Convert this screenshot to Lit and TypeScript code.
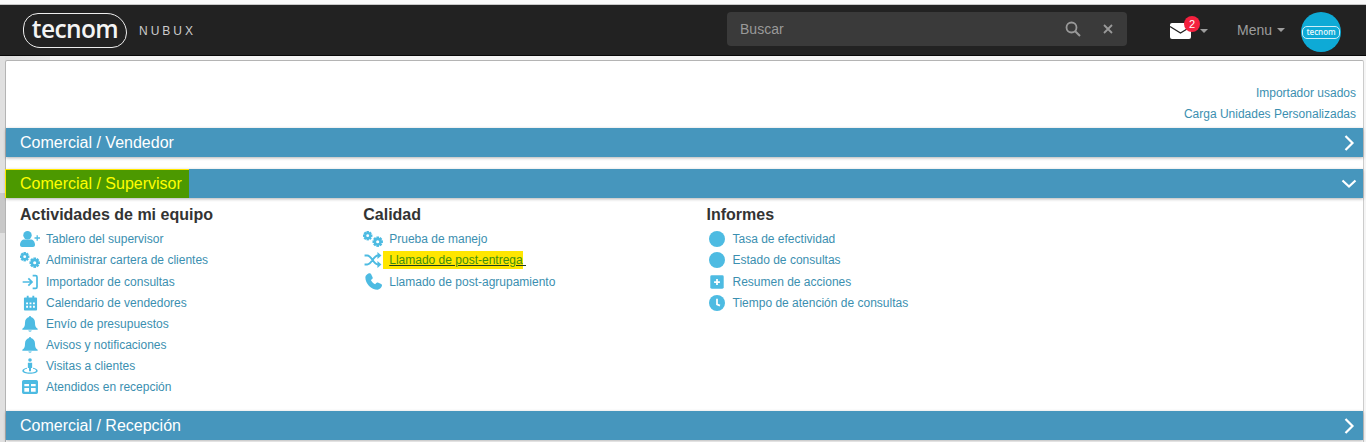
import { LitElement, html, css, svg } from "lit";
import { customElement } from "lit/decorators.js";

const ic = (body: unknown, w = 16, h = 16, vb = "0 0 24 24") =>
  html`<svg class="ic" width=${w} height=${h} viewBox=${vb} fill="#4dbbe2">${body}</svg>`;
const gear = (cx: number, cy: number, r: number) => svg`
  ${[0, 45, 90, 135].map(
    (a) => svg`<rect x=${cx - r * 0.26} y=${cy - r} width=${r * 0.52} height=${r * 2} transform="rotate(${a} ${cx} ${cy})"></rect>`
  )}
  <circle cx=${cx} cy=${cy} r=${r * 0.74}></circle>
  <circle cx=${cx} cy=${cy} r=${r * 0.3} fill="#fff"></circle>`;
const icons: Record<string, unknown> = {
  userPlus: ic(
    svg`<circle cx="7.500" cy="4.200" r="4.200"></circle><path d="M0 14c0-3.500 2-5.500 4.500-5.500h6c2.500 0 4.500 2 4.500 5.500 0 1.300-1 2-2 2H2c-1 0-2-.7-2-2z"></path><path d="M14.500 7h5.500M17.200 4.300v5.400" stroke="#4dbbe2" stroke-width="1.300" fill="none"></path>`,
    20, 16, "0 0 20 16"
  ),
  gears: ic(svg`${gear(4.700, 4.700, 4.700)}${gear(14.700, 10.700, 5.200)}`, 20, 16, "0 0 20 16"),
  signIn: ic(svg`<path d="M1 12h13M9.500 6.500L15 12l-5.500 5.500" fill="none" stroke="#4dbbe2" stroke-width="2.600"></path><path d="M16 2.500h4.500a2 2 0 0 1 2 2v15a2 2 0 0 1-2 2H16" fill="none" stroke="#4dbbe2" stroke-width="2.600"></path>`),
  calendar: ic(svg`<path fill-rule="evenodd" d="M3 3h3V.5h3V3h6V.5h3V3h3a1.500 1.500 0 0 1 1.500 1.500v18A1.500 1.500 0 0 1 21 24H3a1.500 1.500 0 0 1-1.500-1.500v-18A1.500 1.500 0 0 1 3 3zM5 11v3h3v-3zm5.500 0v3h3v-3zM16 11v3h3v-3zM5 16.500v3h3v-3zm5.500 0v3h3v-3zM16 16.500v3h3v-3z"></path>`, 15, 16),
  bell: ic(svg`<path d="M12 0c1 0 1.500.8 1.500 1.600C17 2.500 19.500 5.500 19.500 10c0 5 1 7 4 9v1.500H.5V19c3-2 4-4 4-9 0-4.500 2.500-7.500 6-8.400C10.500.8 11 0 12 0z"></path><path d="M9.500 21.800h5c0 1-1 1.800-2.500 1.800s-2.500-.8-2.500-1.800z"></path>`),
  street: ic(svg`<circle cx="12" cy="3" r="2.700"></circle><path d="M8.800 7h6.400v8h-1.700v5h-3v-5H8.800z"></path><path d="M7.500 14.500C3.500 15.300.5 17 .5 19c0 2.800 5 4.500 11.500 4.500S23.500 21.800 23.500 19c0-2-3-3.700-7-4.500v1.700c2.800.6 4.500 1.600 4.500 2.800 0 1.500-4 2.700-9 2.700s-9-1.200-9-2.700c0-1.200 1.700-2.200 4.500-2.800z"></path>`),
  table: ic(svg`<path fill-rule="evenodd" d="M2.500 1.500h19A2.500 2.500 0 0 1 24 4v16a2.500 2.500 0 0 1-2.500 2.500h-19A2.500 2.500 0 0 1 0 20V4a2.500 2.500 0 0 1 2.500-2.500zM3.500 11h7V7.500h-7zm10 0h7V7.500h-7zm-10 8h7v-5.500h-7zm10 0h7v-5.500h-7z"></path>`),
  random: ic(svg`<path d="M0 4h3c5 0 7 10 12 10h1M0 14h3c5 0 7-10 12-10h1" fill="none" stroke="#4dbbe2" stroke-width="2.200"></path><path d="M14.500 0L19 4l-4.500 4zM14.500 10l4.500 4-4.500 4z"></path>`, 18, 16, "0 0 19 18"),
  phone: ic(svg`<path d="M5.500.5c1.300-.6 2.500-.2 3 .9l2.200 4.600c.4.900.2 1.700-.5 2.300L8.300 9.900c1.200 2.700 3.300 4.800 6 6l1.600-1.900c.6-.7 1.400-.9 2.300-.5l4.600 2.200c1.100.5 1.500 1.700.9 3-1.100 2.500-3.100 4.800-6 4.800C8.900 23.500.5 15.100.5 6.300.5 3.600 3 1.600 5.500.5z"></path>`, 17, 17),
  circle: ic(svg`<circle cx="12" cy="12" r="12"></circle>`),
  plusSq: ic(svg`<rect x="0.500" y="0.500" width="23" height="23" rx="2.500"></rect><path d="M12 7v10M7 12h10" stroke="#fff" stroke-width="3"></path>`, 14, 14),
  clock: ic(svg`<circle cx="12" cy="12" r="12"></circle><path d="M12 5.500V14l4.500 2" fill="none" stroke="#fff" stroke-width="2.600"></path>`),
};

const cols = [
  {
    title: "Actividades de mi equipo",
    items: [
      ["userPlus", "Tablero del supervisor"],
      ["gears", "Administrar cartera de clientes"],
      ["signIn", "Importador de consultas"],
      ["calendar", "Calendario de vendedores"],
      ["bell", "Envío de presupuestos"],
      ["bell", "Avisos y notificaciones"],
      ["street", "Visitas a clientes"],
      ["table", "Atendidos en recepción"],
    ],
  },
  {
    title: "Calidad",
    items: [
      ["gears", "Prueba de manejo"],
      ["random", "Llamado de post-entrega\u00a0", "mark"],
      ["phone", "Llamado de post-agrupamiento"],
    ],
  },
  {
    title: "Informes",
    items: [
      ["circle", "Tasa de efectividad"],
      ["circle", "Estado de consultas"],
      ["plusSq", "Resumen de acciones"],
      ["clock", "Tiempo de atención de consultas"],
    ],
  },
];

const chevRight = html`<svg class="chev" viewBox="0 0 16 16"><path d="M4.500 1l7 7-7 7" fill="none" stroke="#fff" stroke-width="2.200"></path></svg>`;
const chevDown = html`<svg class="chev" viewBox="0 0 16 16"><path d="M1.500 4.500l6.500 6 6.500-6" fill="none" stroke="#fff" stroke-width="2.200"></path></svg>`;

@customElement("app-root")
export class AppRoot extends LitElement {
  static styles = css`
    :host { display: block; width: 1366px; height: 442px; overflow: hidden; background: #f5f5f5; font-family: "Liberation Sans", Arial, sans-serif; }
    .strip { height: 5px; box-sizing: border-box; background: #fafafa; border-bottom: 1px solid #c8c8c8; }
    nav { height: 51px; box-sizing: border-box; background: #222; border-bottom: 1px solid #080808; display: flex; align-items: center; }
    .brand { margin-left: 23px; display: flex; align-items: center; }
    .pill { width: 104px; height: 35px; box-sizing: border-box; border: 1.500px solid #eee; border-radius: 15px 20px 15px 17px; color: #f4f4f4; font: 600 24.500px/24px "Open Sans", sans-serif; letter-spacing: -0.6px; display: flex; justify-content: center; align-items: center; padding-bottom: 3px; }
    .nubux { margin: 2px 0 0 12px; color: #ccc; font-size: 12px; letter-spacing: 3px; }
    .search { margin: -2px 0 0 531px; width: 400px; height: 34px; background: #3a3a3a; border-radius: 4px; display: flex; align-items: center; color: #999; font-size: 14px; box-sizing: border-box; padding: 0 13px; }
    .search span { flex: 1; }
    .search svg { display: block; }
    .search .x { margin-left: 21px; }
    .mail { margin: 2px 0 0 43px; position: relative; display: flex; width: 21px; }
    .badge { position: absolute; left: 14px; top: -7px; width: 16px; height: 16px; border-radius: 50%; background: #f5203e; color: #fff; font-size: 11px; line-height: 16px; text-align: center; }
    .caret { width: 0; height: 0; border-top: 4px solid #9d9d9d; border-left: 4px solid transparent; border-right: 4px solid transparent; }
    .caret.m { margin-left: 9px; margin-top: 2px; }
    .menu { margin-left: 29px; color: #9d9d9d; font-size: 14px; display: flex; align-items: center; gap: 5px; }
    .avatar { margin: 4px 0 0 16px; width: 40px; height: 40px; border-radius: 50%; background: #0eaad6; display: flex; align-items: center; justify-content: center; }
    .avatar span { border: 1px solid #cdeef8; border-radius: 5px; color: #e8f8fd; font: 600 8px/8px "Open Sans", sans-serif; padding: 1px 3px 2px; }
    .wrap {
      padding: 4px 2px 0 5px;
      background:
        linear-gradient(#c8c8c8, #c8c8c8) 0 137px / 5px 40px no-repeat,
        linear-gradient(#e0e0e0, #e0e0e0) 0 0 / 5px 100% no-repeat,
        linear-gradient(90deg, #dcdcdc, #e8e8e8) 0 0 / 50px 4px no-repeat,
        #f5f5f5;
    }
    .panel { background: #fff; border: 1px solid #b4b4b4; border-right-color: #ccc; height: 400px; box-sizing: border-box; border-radius: 2px 2px 0 0; }
    .top { display: flex; flex-direction: column; align-items: flex-end; gap: 7px; padding: 25px 7px 6px 0; height: 66px; box-sizing: border-box; margin-bottom: 1px; }
    a { color: #3b8fb0; font-size: 12px; line-height: 14px; text-decoration: none; display: block; white-space: nowrap; }
    .bar { height: 29px; background: #4696bd; color: #fff; font-size: 16px; display: flex; align-items: center; justify-content: space-between; padding: 0 6px 0 14px; box-shadow: 0 1px 3px rgba(0, 0, 0, 0.3); }
    .bar.sel { margin-top: 12px; height: 28px; padding-left: 0; border-top: 1px solid #4696bd; }
    .sel .t { background: #4c9900; color: #ffff00; height: 29px; margin: -2px 0 0 -1px; border: solid #ffe600; border-width: 1px 0 0 1px; box-sizing: border-box; padding: 0 7px 0 14px; width: 184px; line-height: 28px; }
    .chev { width: 16px; height: 16px; display: block; }
    .cols { display: flex; padding: 7px 0 0 14px; height: 213px; box-sizing: border-box; }
    .col { width: 343.250px; }
    h4 { margin: 0 0 5px; font-size: 16px; line-height: 20px; font-weight: 700; color: #333; }
    .rows { display: flex; flex-direction: column; gap: 4px; }
    .row { display: flex; align-items: center; height: 17px; gap: 6px; }
    .row:nth-child(3) { margin-top: 1px; }
    .slot { width: 20px; flex: none; display: flex; justify-content: center; }
    .ic { display: block; flex: none; }
    .hl { background: #ffe600; margin: -1px 0 -1px -6px; padding: 2px 0 2px 6px; height: 18px; width: 140px; box-sizing: border-box; color: #3e8f0e; text-decoration: underline; text-decoration-color: #1f3d1f; }
  `;

  render() {
    return html`
      <div class="strip"></div>
      <nav>
        <div class="brand">
          <div class="pill">tecnom</div>
          <div class="nubux">NUBUX</div>
        </div>
        <div class="search">
          <span>Buscar</span>
          <svg width="16" height="16" viewBox="0 0 16 16"><circle cx="6.500" cy="6.500" r="5" fill="none" stroke="#999" stroke-width="1.800"></circle><path d="M10.200 10.200L15 15" stroke="#999" stroke-width="2"></path></svg>
          <svg class="x" width="12" height="12" viewBox="0 0 12 12"><path d="M2 2l8 8M10 2l-8 8" stroke="#999" stroke-width="1.800"></path></svg>
        </div>
        <div class="mail">
          <svg width="21" height="16" viewBox="0 0 21 16"><rect width="21" height="16" rx="2" fill="#fff"></rect><path d="M0 3.500l10.500 6.500L21 3.500" fill="none" stroke="#222" stroke-width="1.300"></path></svg>
          <div class="badge">2</div>
        </div>
        <div class="caret m"></div>
        <div class="menu">Menu <div class="caret"></div></div>
        <div class="avatar"><span>tecnom</span></div>
      </nav>
      <div class="wrap">
        <div class="panel">
          <div class="top">
            <a>Importador usados</a>
            <a>Carga Unidades Personalizadas</a>
          </div>
          <div class="bar"><span>Comercial / Vendedor</span>${chevRight}</div>
          <div class="bar sel"><span class="t">Comercial / Supervisor</span>${chevDown}</div>
          <div class="cols">
            ${cols.map(
              (c) => html`<div class="col">
                <h4>${c.title}</h4>
                <div class="rows">
                  ${c.items.map(
                    (r) => html`<div class="row"><span class="slot">${icons[r[0]]}</span><a class=${r[2] ? "hl" : ""}>${r[1]}</a></div>`
                  )}
                </div>
              </div>`
            )}
          </div>
          <div class="bar"><span>Comercial / Recepción</span>${chevRight}</div>
        </div>
      </div>
    `;
  }
}
